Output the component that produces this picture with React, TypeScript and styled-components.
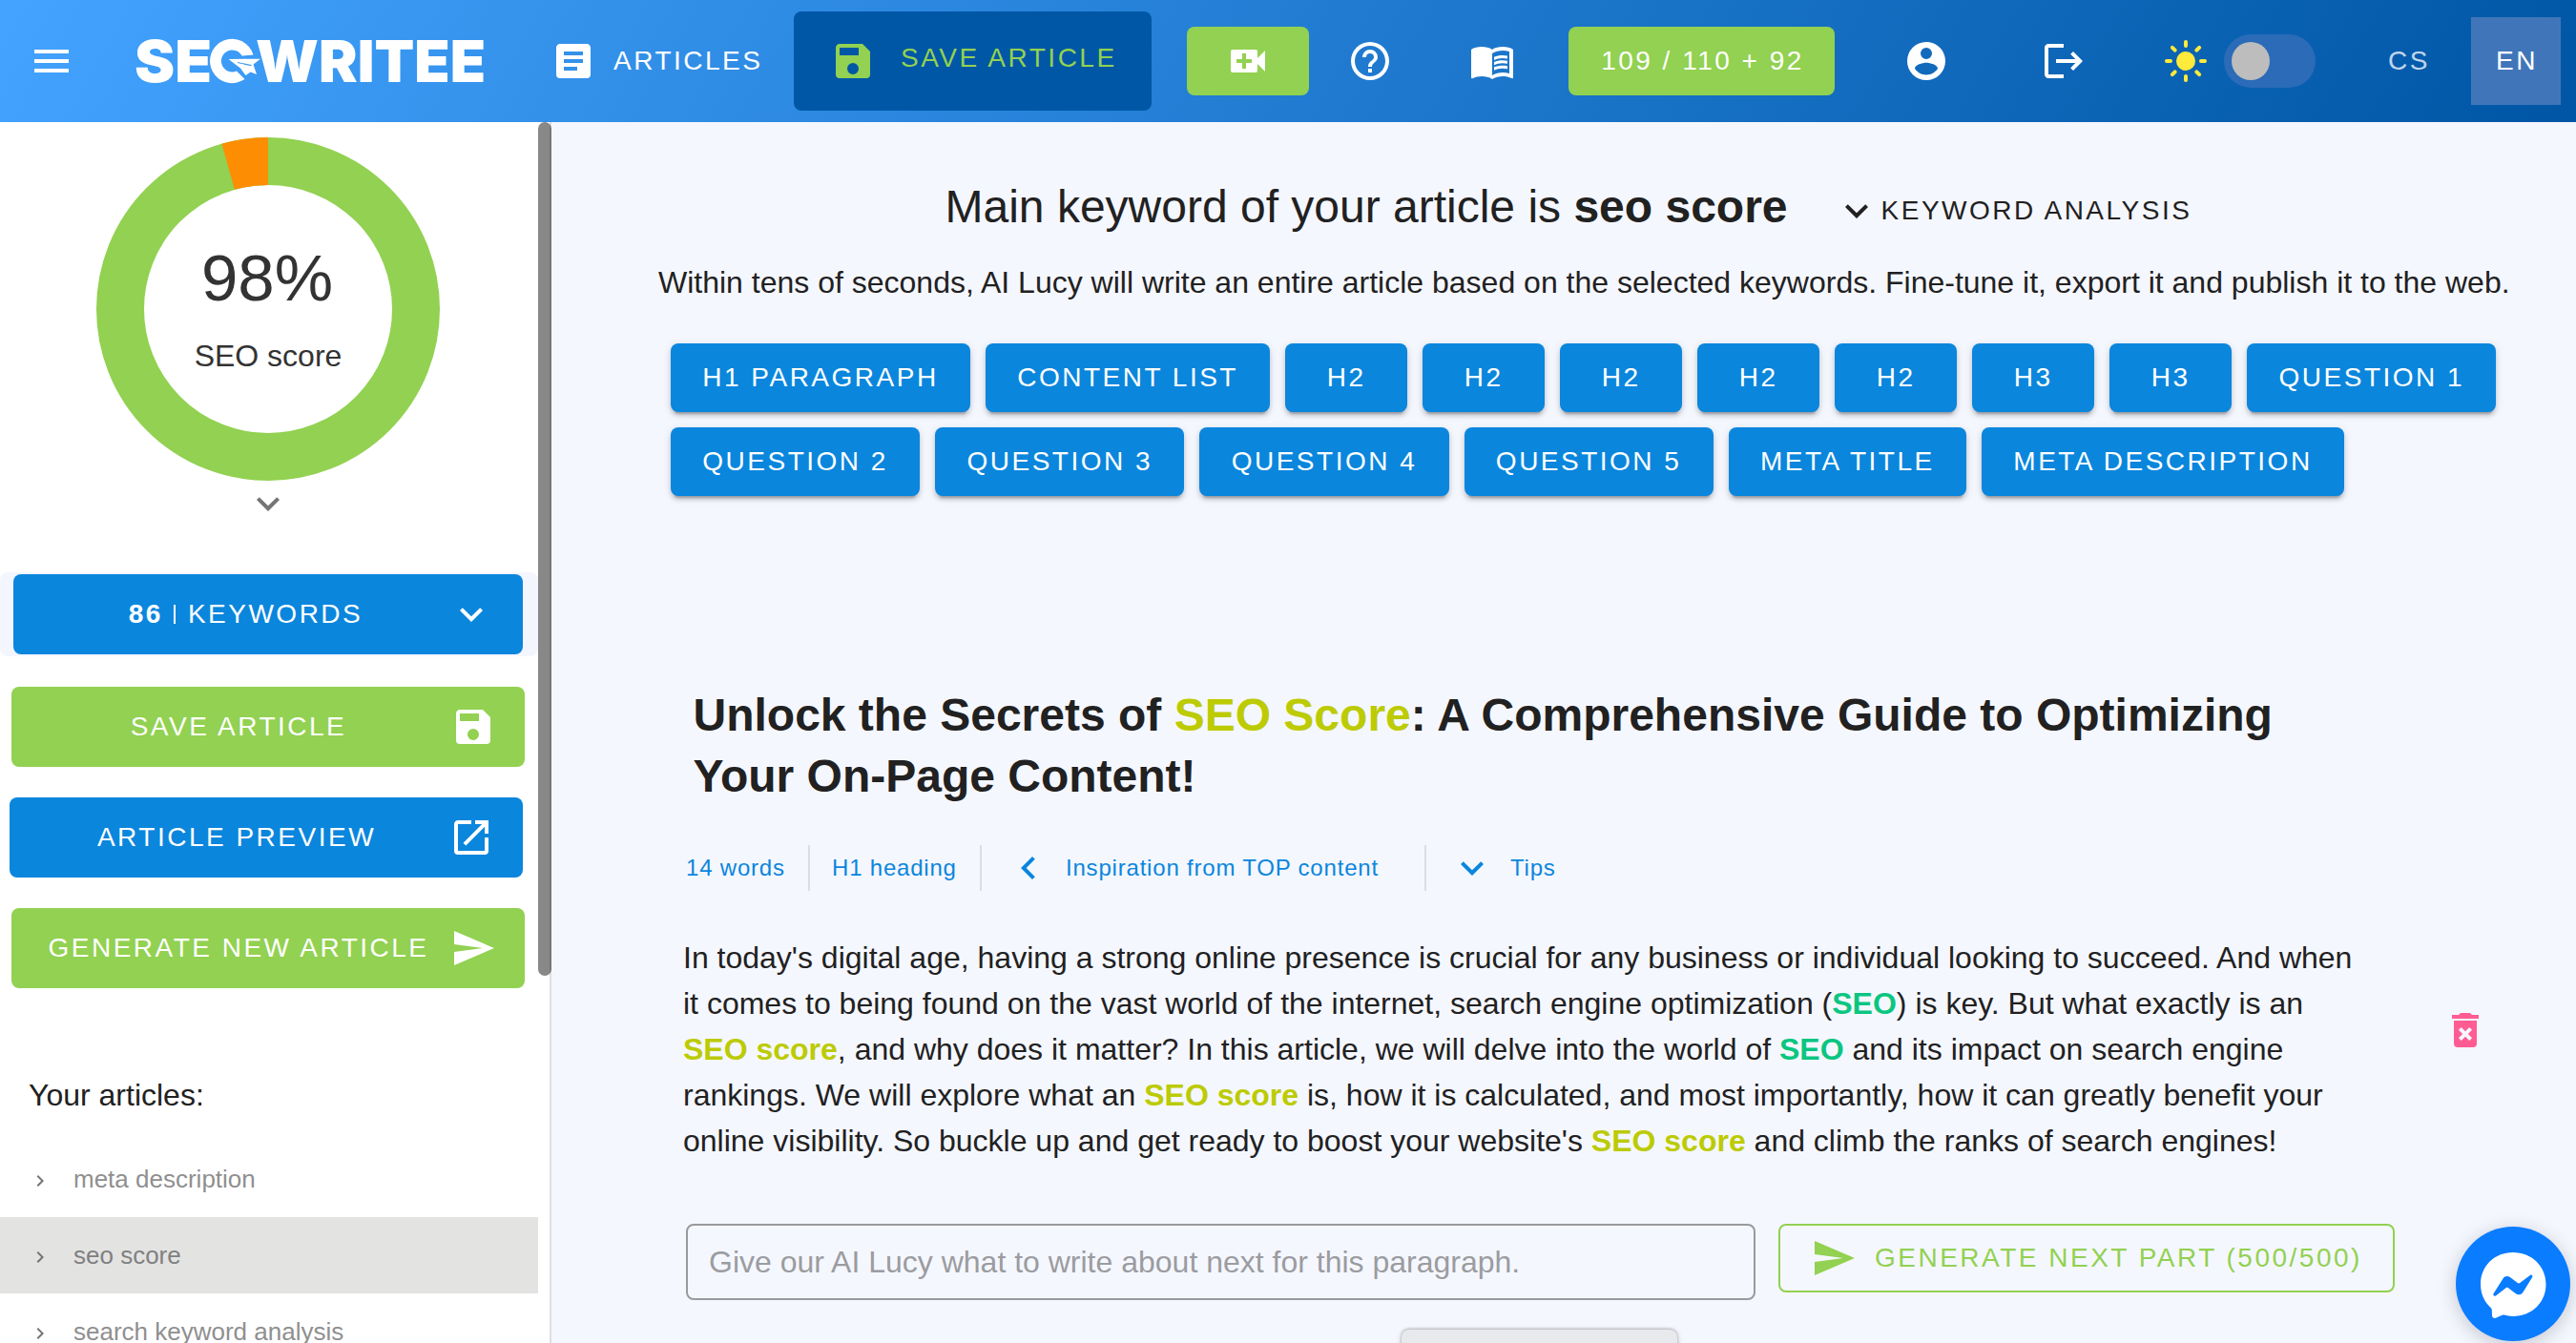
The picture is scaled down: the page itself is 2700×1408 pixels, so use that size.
import React from "react";
import styled, { createGlobalStyle } from "styled-components";
import { MdMenuBook } from "react-icons/md";

const BLUE = "#0a86dd";
const GREEN = "#92d151";
const INK = "#212121";

const GlobalStyle = createGlobalStyle`
  * { box-sizing: border-box; }
  body {
    margin: 0;
    font-family: "Liberation Sans", Arial, Helvetica, sans-serif;
    color: ${INK};
    background: #f5f7ff;
    overflow: hidden;
  }
  button { font: inherit; border: 0; padding: 0; margin: 0; background: none; color: inherit; }
  h1, h2, p, ul { margin: 0; padding: 0; font-weight: 400; }
`;

const paths = {
  menu: "M3,6H21V8H3V6M3,11H21V13H3V11M3,16H21V18H3V16Z",
  textBox:
    "M14,17H7V15H14M17,13H7V11H17M17,9H7V7H17M19,3H5C3.89,3 3,3.89 3,5V19A2,2 0 0,0 5,21H19A2,2 0 0,0 21,19V5C21,3.89 20.1,3 19,3Z",
  save: "M15,9H5V5H15M12,19A3,3 0 0,1 9,16A3,3 0 0,1 12,13A3,3 0 0,1 15,16A3,3 0 0,1 12,19M17,3H5C3.89,3 3,3.9 3,5V19A2,2 0 0,0 5,21H19A2,2 0 0,0 21,19V7L17,3Z",
  videoPlus:
    "M17,10.5V7A1,1 0 0,0 16,6H4A1,1 0 0,0 3,7V17A1,1 0 0,0 4,18H16A1,1 0 0,0 17,17V13.5L21,17.5V6.5L17,10.5M14,13H11V16H9V13H6V11H9V8H11V11H14V13Z",
  help: "M11,18H13V16H11V18M12,2A10,10 0 0,0 2,12A10,10 0 0,0 12,22A10,10 0 0,0 22,12A10,10 0 0,0 12,2M12,20C7.59,20 4,16.41 4,12C4,7.59 7.59,4 12,4C16.41,4 20,7.59 20,12C20,16.41 16.41,20 12,20M12,6A4,4 0 0,0 8,10H10A2,2 0 0,1 12,8A2,2 0 0,1 14,10C14,12 11,11.75 11,15H13C13,12.75 16,12.5 16,10A4,4 0 0,0 12,6Z",
  account:
    "M12,19.2C9.5,19.2 7.29,17.92 6,16C6.03,14 10,12.9 12,12.9C14,12.9 17.97,14 18,16C16.71,17.92 14.5,19.2 12,19.2M12,5A3,3 0 0,1 15,8A3,3 0 0,1 12,11A3,3 0 0,1 9,8A3,3 0 0,1 12,5M12,2A10,10 0 0,0 2,12A10,10 0 0,0 12,22A10,10 0 0,0 22,12C22,6.47 17.5,2 12,2Z",
  logout:
    "M17 7L15.59 8.41L18.17 11H8V13H18.17L15.59 15.58L17 17L22 12M4 5H12V3H4C2.9 3 2 3.9 2 5V19C2 20.1 2.9 21 4 21H12V19H4V5Z",
  chevronDown: "M7.41,8.58L12,13.17L16.59,8.58L18,10L12,16L6,10L7.41,8.58Z",
  chevronLeft: "M15.41,16.58L10.83,12L15.41,7.41L14,6L8,12L14,18L15.41,16.58Z",
  chevronRight: "M8.59,16.58L13.17,12L8.59,7.41L10,6L16,12L10,18L8.59,16.58Z",
  openInNew:
    "M14,3V5H17.59L7.76,14.83L9.17,16.24L19,6.41V10H21V3M19,19H5V5H12V3H5C3.89,3 3,3.9 3,5V19A2,2 0 0,0 5,21H19A2,2 0 0,0 21,19V12H19V19Z",
  send: "M2,21L23,12L2,3V10L17,12L2,14V21Z",
  trash:
    "M6,19A2,2 0 0,0 8,21H16A2,2 0 0,0 18,19V7H6V19M8.46,11.88L9.87,10.47L12,12.59L14.12,10.47L15.53,11.88L13.41,14L15.53,16.12L14.12,17.53L12,15.41L9.88,17.53L8.47,16.12L10.59,14L8.46,11.88M15.5,4L14.5,3H9.5L8.5,4H5V6H19V4H15.5Z",
};

const Glyph = styled.svg<{ $size: number }>`
  display: block;
  flex: none;
  width: ${(p) => p.$size}px;
  height: ${(p) => p.$size}px;
  fill: currentColor;
`;

const Icon = ({ name, size = 48 }: { name: keyof typeof paths; size?: number }) => (
  <Glyph $size={size} viewBox="0 0 24 24">
    <path d={paths[name]} />
  </Glyph>
);

/* ---------- shell ---------- */

const Page = styled.div`
  display: flex;
  flex-direction: column;
  width: 2700px;
  height: 1408px;
  overflow: hidden;
`;

const Body = styled.div`
  display: flex;
  flex: 1;
  min-height: 0;
`;

/* ---------- header ---------- */

const Header = styled.header`
  display: flex;
  align-items: center;
  flex: none;
  height: 128px;
  padding-left: 30px;
  color: #fff;
  font-size: 28px;
  letter-spacing: 2.5px;
  white-space: nowrap;
  background: linear-gradient(120deg, #43a3ff 0%, #0056a5 100%);
`;

const Slot = styled.div<{ $gap: number; $width?: number }>`
  display: flex;
  align-items: center;
  flex: none;
  margin-left: ${(p) => p.$gap}px;
  width: ${(p) => (p.$width ? `${p.$width}px` : "auto")};
`;

const SunSlot = styled(Slot)`
  color: #ffeb3b;
`;

const LogoSvg = styled.svg`
  display: block;
  width: 372px;
  height: 96px;
  overflow: visible;
  fill: #fff;
  font-family: Inter, "Liberation Sans", sans-serif;
  font-weight: 900;
  font-size: 61px;
  letter-spacing: 0;
`;

const SaveTab = styled.button`
  display: flex;
  align-items: center;
  width: 375px;
  height: 104px;
  padding: 0 0 0 38px;
  gap: 26px;
  border-radius: 8px;
  background: #0057a6;
  color: ${GREEN};
  letter-spacing: 2.5px;

  span { margin-top: -6px; }
`;

const GreenChip = styled.button<{ $width: number }>`
  display: flex;
  align-items: center;
  justify-content: center;
  width: ${(p) => p.$width}px;
  height: 72px;
  padding-left: ${(p) => (p.$width > 128 ? 2 : 0)}px;
  border-radius: 8px;
  background: ${GREEN};
  letter-spacing: 2.5px;
`;

const SwitchTrack = styled.div`
  display: flex;
  align-items: center;
  width: 96px;
  height: 56px;
  padding: 8px;
  border-radius: 28px;
  background: #2b6bb8;
`;

const SwitchThumb = styled.div`
  width: 40px;
  height: 40px;
  border-radius: 50%;
  background: #bdbdbd;
`;

const Lang = styled.button<{ $active?: boolean }>`
  width: 94px;
  height: 92px;
  padding-left: 2px;
  letter-spacing: 2.5px;
  color: ${(p) => (p.$active ? "#fff" : "rgba(255,255,255,.75)")};
  background: ${(p) => (p.$active ? "#4076b9" : "transparent")};
`;

/* ---------- sidebar ---------- */

const Sidebar = styled.aside`
  display: flex;
  flex: none;
  width: 578px;
  background: #fff;
`;

const SidebarContent = styled.div`
  display: flex;
  flex-direction: column;
  width: 564px;
  overflow: hidden;
`;

const ScrollTrack = styled.div`
  width: 14px;
  background: linear-gradient(to right, #fff 12px, #dfdfdf 12px);
`;

const ScrollThumb = styled.div`
  height: 895px;
  border-radius: 7px;
  background: linear-gradient(to right, #888 12px, #777 12px);
`;

const Gauge = styled.div`
  display: grid;
  flex: none;
  margin: 16px 0 0 101px;
  width: 360px;
  height: 360px;

  > * { grid-area: 1 / 1; }
`;

const GaugeText = styled.div`
  display: flex;
  flex-direction: column;
  align-items: center;
  color: #333;

  strong { font-weight: 400; font-size: 69px; line-height: 80px; margin: 108px 2px 0 0; }
  span { font-size: 32px; line-height: 48px; margin-top: 17px; }
`;

const GaugeToggle = styled.div`
  display: flex;
  flex: none;
  justify-content: center;
  padding-right: 2px;
  height: 48px;
  color: #757575;
`;

const KeywordStrip = styled.div`
  flex: none;
  height: 88px;
  margin-top: 48px;
  padding: 2px 16px 2px 14px;
  border-radius: 8px;
  background: #f4f6ff;
`;

const SideButton = styled.button<{ $tone: "blue" | "green"; $inset: number; $end: number }>`
  display: flex;
  align-items: center;
  width: 100%;
  height: 84px;
  padding: 0 ${(p) => p.$end}px 0 ${(p) => p.$inset}px;
  border-radius: 8px;
  color: #fff;
  background: ${(p) => (p.$tone === "blue" ? BLUE : GREEN)};
  font-size: 28px;
  letter-spacing: 2.5px;
  white-space: nowrap;
`;

const SideLabel = styled.span`
  display: flex;
  flex: 1;
  align-items: center;
  justify-content: center;

  i { width: 2px; height: 20px; margin: 0 13px 0 11px; background: #fff; }
`;

const SideActions = styled.div`
  display: flex;
  flex: none;
  flex-direction: column;
  gap: 32px;
  margin-top: 32px;
`;

const ActionRow = styled.div<{ $left: number; $right: number }>`
  padding: 0 ${(p) => p.$right}px 0 ${(p) => p.$left}px;
`;

const ListTitle = styled.h2`
  flex: none;
  margin-top: 88px;
  padding-left: 30px;
  font-size: 32px;
  line-height: 48px;
`;

const ArticleRow = styled.div<{ $active?: boolean }>`
  display: flex;
  align-items: center;
  flex: none;
  gap: 23px;
  height: 80px;
  padding-left: 30px;
  font-size: 26px;
  color: ${(p) => (p.$active ? "#808080" : "#8f8f8f")};
  background: ${(p) => (p.$active ? "#e3e3e2" : "transparent")};

  svg { margin-top: 4px; color: #757575; }
`;

const ArticleList = styled.div`
  margin-top: 24px;
`;

/* ---------- main ---------- */

const Main = styled.main`
  flex: 1;
  min-width: 0;
  padding-top: 57px;
  white-space: nowrap;
`;

const TitleRow = styled.div`
  display: flex;
  align-items: center;
  height: 64px;
  padding-left: 412.5px;

  h1 { font-size: 48px; line-height: 64px; }
`;

const AnalysisToggle = styled.button`
  display: flex;
  align-items: center;
  gap: 2px;
  margin: 7px 0 0 48px;
  font-size: 28px;
  letter-spacing: 2.5px;
`;

const Intro = styled.p`
  margin-top: 23px;
  padding-left: 112px;
  font-size: 32px;
  line-height: 48px;
`;

const Chips = styled.div`
  display: flex;
  flex-wrap: wrap;
  gap: 16px;
  width: 1940px;
  margin: 40px 0 0 125px;
`;

const Chip = styled.button`
  min-width: 128px;
  height: 72px;
  padding: 0 33.3px;
  border-radius: 8px;
  color: #fff;
  background: ${BLUE};
  font-size: 28px;
  letter-spacing: 2.5px;
  box-shadow: 0 6px 2px -4px rgba(0, 0, 0, 0.2), 0 4px 4px 0 rgba(0, 0, 0, 0.14),
    0 2px 10px 0 rgba(0, 0, 0, 0.12);
`;

const Heading = styled.h2`
  margin-top: 198px;
  padding-left: 148.5px;
  font-size: 48px;
  line-height: 64px;
  font-weight: 700;
`;

const InfoRow = styled.div`
  display: flex;
  align-items: center;
  height: 48px;
  margin-top: 40px;
  padding-left: 141px;
  font-size: 24px;
  letter-spacing: 0.8px;
  color: ${BLUE};
`;

const InfoCell = styled.div<{ $width: number; $pad?: number; $gap?: number; $line?: boolean }>`
  display: flex;
  align-items: center;
  flex: none;
  gap: ${(p) => p.$gap ?? 0}px;
  width: ${(p) => p.$width}px;
  height: 48px;
  padding-left: ${(p) => p.$pad ?? 0}px;
  border-right: ${(p) => (p.$line ? "2px solid #dcdde3" : "0")};
`;

const ParagraphRow = styled.div`
  display: flex;
  margin-top: 46px;
  padding-left: 138px;
`;

const Paragraph = styled.p`
  width: 1844px;
  font-size: 32px;
  line-height: 48px;
`;

const Mark = styled.b<{ $tone: "olive" | "teal" }>`
  color: ${(p) => (p.$tone === "olive" ? "#bccb03" : "#0ac680")};
`;

const DeleteButton = styled.button`
  width: 48px;
  height: 48px;
  margin-top: 76px;
  color: #ff5c93;
`;

const PromptRow = styled.div`
  display: flex;
  align-items: flex-start;
  gap: 24px;
  margin-top: 63px;
  padding-left: 141px;
`;

const Prompt = styled.input`
  width: 1121px;
  height: 80px;
  padding: 0 22px;
  border: 2px solid #9a9a9d;
  border-radius: 8px;
  background: transparent;
  font: inherit;
  font-size: 32px;

  &::placeholder { color: #9b9c9f; opacity: 1; }
`;

const NextButton = styled.button`
  display: flex;
  align-items: center;
  gap: 19px;
  width: 646px;
  height: 72px;
  padding-left: 32px;
  border: 2px solid ${GREEN};
  border-radius: 8px;
  color: ${GREEN};
  font-size: 28px;
  letter-spacing: 2.5px;
`;

const AddButton = styled.button`
  display: flex;
  justify-content: flex-start;
  width: 289px;
  height: 72px;
  margin: 31px 0 0 891px;
  padding: 12px 0 0 41px;
  border-radius: 8px;
  color: ${INK};
  background: #e8e9ec;
  box-shadow: 0 -1px 3px rgba(0, 0, 0, 0.25), 0 2px 6px rgba(0, 0, 0, 0.2);
`;

const Messenger = styled.button`
  position: fixed;
  left: 2574px;
  top: 1286px;
  width: 120px;
  height: 120px;
  border-radius: 50%;
  background: #0a7cff;
  box-shadow: 0 4px 20px rgba(0, 0, 0, 0.2);
`;

const chips = [
  "H1 PARAGRAPH", "CONTENT LIST", "H2", "H2", "H2", "H2", "H2", "H3", "H3", "QUESTION 1",
  "QUESTION 2", "QUESTION 3", "QUESTION 4", "QUESTION 5", "META TITLE", "META DESCRIPTION",
];

const Logo = () => (
  <LogoSvg viewBox="140 16 372 96">
    <text x="141" y="86" textLength="81" lengthAdjust="spacingAndGlyphs">SE</text>
    <path d="M265.5 57.500A23.200 23.200 0 1 0 256.500 83L248 74.500A11.500 11.500 0 1 1 253.500 58.500Z" />
    <path d="M239.500 62L273 61.700L265.500 67.500L269 78L262.500 75.500L257.500 79L252 71.500Z" />
    <path d="M249 65.500L263.500 68.600" stroke="#3d98f0" strokeWidth="1.2" />
    <text x="268" y="86" textLength="241" lengthAdjust="spacingAndGlyphs">WRITEE</text>
  </LogoSvg>
);

const Sun = () => (
  <Glyph $size={48} viewBox="0 0 24 24">
    <circle cx="12" cy="12" r="5" />
    <g stroke="currentColor" strokeWidth="2" strokeLinecap="round">
      {[0, 45, 90, 135, 180, 225, 270, 315].map((angle) => (
        <line key={angle} x1="12" y1="2" x2="12" y2="4" transform={`rotate(${angle} 12 12)`} />
      ))}
    </g>
  </Glyph>
);

const ScoreRing = () => {
  const share = 0.0435;
  const length = 2 * Math.PI * 155;
  return (
    <svg width="360" height="360" viewBox="0 0 360 360" fill="none" strokeWidth="50">
      <circle cx="180" cy="180" r="155" stroke={GREEN} />
      <circle
        cx="180"
        cy="180"
        r="155"
        stroke="#fd8e03"
        strokeDasharray={`${length * share} ${length}`}
        transform={`rotate(${-90 - 360 * share} 180 180)`}
      />
    </svg>
  );
};

export default function App() {
  return (
    <Page>
      <GlobalStyle />
      <Header>
        <Icon name="menu" />
        <Slot $gap={62}><Logo /></Slot>
        <Slot $gap={65}><Icon name="textBox" /></Slot>
        <Slot $gap={18} $width={189}>ARTICLES</Slot>
        <SaveTab>
          <Icon name="save" />
          <span>SAVE ARTICLE</span>
        </SaveTab>
        <Slot $gap={37}><GreenChip $width={128}><Icon name="videoPlus" /></GreenChip></Slot>
        <Slot $gap={40}><Icon name="help" /></Slot>
        <Slot $gap={80}><MdMenuBook size={48} /></Slot>
        <Slot $gap={56}><GreenChip $width={279}>109 / 110 + 92</GreenChip></Slot>
        <Slot $gap={72}><Icon name="account" /></Slot>
        <Slot $gap={96}><Icon name="logout" /></Slot>
        <SunSlot $gap={80}><Sun /></SunSlot>
        <Slot $gap={16}><SwitchTrack><SwitchThumb /></SwitchTrack></Slot>
        <Slot $gap={50}>
          <Lang>CS</Lang>
        </Slot>
        <Slot $gap={19}>
          <Lang $active>EN</Lang>
        </Slot>
      </Header>
      <Body>
        <Sidebar>
          <SidebarContent>
            <Gauge>
              <ScoreRing />
              <GaugeText>
                <strong>98%</strong>
                <span>SEO score</span>
              </GaugeText>
            </Gauge>
            <GaugeToggle><Icon name="chevronDown" /></GaugeToggle>
            <KeywordStrip>
              <SideButton $tone="blue" $inset={31} $end={30}>
                <SideLabel><b>86</b><i />KEYWORDS</SideLabel>
                <Icon name="chevronDown" />
              </SideButton>
            </KeywordStrip>
            <SideActions>
              <ActionRow $left={12} $right={14}>
                <SideButton $tone="green" $inset={16} $end={30}>
                  <SideLabel>SAVE ARTICLE</SideLabel>
                  <Icon name="save" />
                </SideButton>
              </ActionRow>
              <ActionRow $left={10} $right={16}>
                <SideButton $tone="blue" $inset={16} $end={30}>
                  <SideLabel>ARTICLE PREVIEW</SideLabel>
                  <Icon name="openInNew" />
                </SideButton>
              </ActionRow>
              <ActionRow $left={12} $right={14}>
                <SideButton $tone="green" $inset={16} $end={30}>
                  <SideLabel>GENERATE NEW ARTICLE</SideLabel>
                  <Icon name="send" />
                </SideButton>
              </ActionRow>
            </SideActions>
            <ListTitle>Your articles:</ListTitle>
            <ArticleList>
              <ArticleRow><Icon name="chevronRight" size={24} />meta description</ArticleRow>
              <ArticleRow $active><Icon name="chevronRight" size={24} />seo score</ArticleRow>
              <ArticleRow><Icon name="chevronRight" size={24} />search keyword analysis</ArticleRow>
            </ArticleList>
          </SidebarContent>
          <ScrollTrack><ScrollThumb /></ScrollTrack>
        </Sidebar>
        <Main>
          <TitleRow>
            <h1>Main keyword of your article is <b>seo score</b></h1>
            <AnalysisToggle><Icon name="chevronDown" />KEYWORD ANALYSIS</AnalysisToggle>
          </TitleRow>
          <Intro>
            Within tens of seconds, AI Lucy will write an entire article based on the selected
            keywords. Fine-tune it, export it and publish it to the web.
          </Intro>
          <Chips>
            {chips.map((label, i) => <Chip key={i}>{label}</Chip>)}
          </Chips>
          <Heading>
            Unlock the Secrets of <Mark $tone="olive">SEO Score</Mark>: A Comprehensive Guide to Optimizing
            <br />
            Your On-Page Content!
          </Heading>
          <InfoRow>
            <InfoCell $width={130} $line>14 words</InfoCell>
            <InfoCell $width={180} $pad={23} $line>H1 heading</InfoCell>
            <InfoCell $width={466} $pad={25} $gap={15} $line>
              <Icon name="chevronLeft" />Inspiration from TOP content
            </InfoCell>
            <InfoCell $width={200} $pad={24} $gap={16}><Icon name="chevronDown" />Tips</InfoCell>
          </InfoRow>
          <ParagraphRow>
            <Paragraph>
              In today's digital age, having a strong online presence is crucial for any business or individual looking to succeed. And when
              <br />
              it comes to being found on the vast world of the internet, search engine optimization (<Mark $tone="teal">SEO</Mark>) is key. But what exactly is an
              <br />
              <Mark $tone="olive">SEO score</Mark>, and why does it matter? In this article, we will delve into the world of <Mark $tone="teal">SEO</Mark> and its impact on search engine
              <br />
              rankings. We will explore what an <Mark $tone="olive">SEO score</Mark> is, how it is calculated, and most importantly, how it can greatly benefit your
              <br />
              online visibility. So buckle up and get ready to boost your website's <Mark $tone="olive">SEO score</Mark> and climb the ranks of search engines!
            </Paragraph>
            <DeleteButton><Icon name="trash" /></DeleteButton>
          </ParagraphRow>
          <PromptRow>
            <Prompt placeholder="Give our AI Lucy what to write about next for this paragraph." />
            <NextButton><Icon name="send" />GENERATE NEXT PART (500/500)</NextButton>
          </PromptRow>
          <AddButton>
            <Glyph $size={48} viewBox="0 0 24 24">
              <path d="M11.3 1H12.7V12H11.3Z" />
            </Glyph>
          </AddButton>
        </Main>
      </Body>
      <Messenger>
        <svg width="120" height="120" viewBox="0 0 120 120">
          <path fill="#fff" d="M60 27C40.500 27 26 41.300 26 60.500C26 70.500 30.100 79.200 36.900 85.200C37.500 85.700 37.800 86.400 37.800 87.200L38 93.300C38.100 95.300 40.100 96.500 41.900 95.700L48.700 92.700C49.300 92.500 49.900 92.400 50.500 92.600C53.500 93.400 56.700 93.900 60 93.900C79.500 93.900 94.500 79.700 94.500 60.500C94.500 41.300 79.500 27 60 27Z" />
          <path fill="#0a7cff" d="M39.500 70.200L49.500 54.400C51.100 51.900 54.500 51.300 56.900 53.100L64.800 59C65.500 59.600 66.500 59.600 67.200 59L77.900 50.900C79.300 49.800 81.200 51.500 80.200 53.100L70.300 68.900C68.700 71.400 65.300 72 62.900 70.200L55 64.300C54.300 63.700 53.300 63.700 52.600 64.300L41.900 72.400C40.500 73.500 38.600 71.800 39.500 70.200Z" />
        </svg>
      </Messenger>
    </Page>
  );
}
